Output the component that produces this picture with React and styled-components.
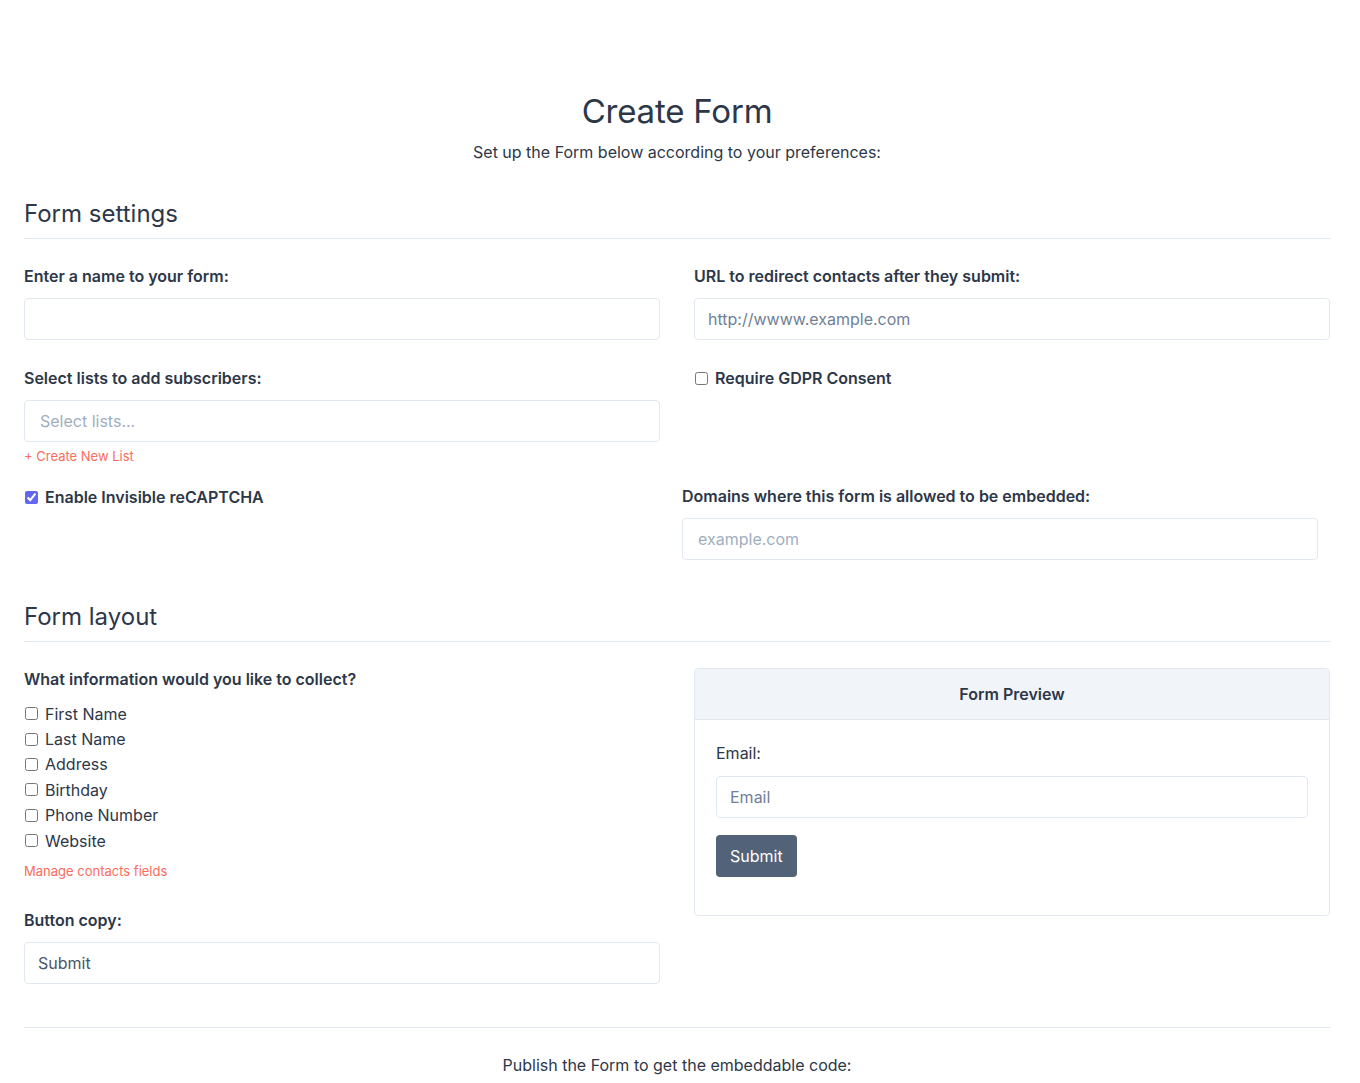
import React from "react";
import styled, { createGlobalStyle } from "styled-components";

const GlobalStyle = createGlobalStyle`
  * { box-sizing: border-box; }
  body {
    margin: 0;
    background: #ffffff;
    font-family: Inter, "Open Sans", "Liberation Sans", sans-serif;
    color: #2d3748;
  }
`;

const Page = styled.div`
  padding: 91px 30px 0 24px;
`;

const Header = styled.header`
  text-align: center;
  margin-bottom: 35px;
`;

const Title = styled.h1`
  margin: 0;
  font-size: 33px;
  line-height: 41px;
  font-weight: 400;
  color: #2d3748;
  letter-spacing: -0.2px;
`;

const Subtitle = styled.p`
  margin: 8px 0 0;
  font-size: 16px;
  line-height: 24px;
  color: #2d3748;
`;

const SectionTitle = styled.h2`
  margin: 0;
  padding-bottom: 10px;
  font-size: 24px;
  line-height: 29px;
  font-weight: 400;
  color: #2d3748;
  border-bottom: 1px solid #e2e8f0;
`;

const Grid = styled.div`
  display: grid;
  grid-template-columns: 1fr 1fr;
  column-gap: 34px;
  row-gap: ${(p) => p.$rowGap || 26}px;
  margin-top: 25px;
  margin-bottom: ${(p) => p.$bottom || 0}px;
  align-items: start;
`;

const Field = styled.div`
  display: flex;
  flex-direction: column;
  margin-left: ${(p) => (p.$shift ? -12 : 0)}px;
  margin-right: ${(p) => (p.$shift ? 12 : 0)}px;
`;

const Label = styled.label`
  display: block;
  font-size: 16px;
  line-height: 24px;
  font-weight: 600;
  color: #2d3748;
  margin-bottom: 10px;
`;

const Input = styled.input`
  width: 100%;
  height: 42px;
  padding: 0 ${(p) => p.$pad || 13}px;
  border: 1px solid #e2e8f0;
  border-radius: 4px;
  font-family: inherit;
  font-size: 16px;
  color: #4a5568;
  background: #fff;
  outline: none;
  &::placeholder {
    color: ${(p) => (p.$light ? "#a0aec0" : "#718096")};
  }
`;

const LinkText = styled.a`
  display: block;
  font-size: 13px;
  line-height: 20px;
  color: #fc6b5c;
  text-decoration: none;
  margin-top: ${(p) => p.$top || 4}px;
`;

const CheckRow = styled.label`
  display: flex;
  align-items: center;
  height: ${(p) => p.$h || 24}px;
  font-size: 16px;
  font-weight: ${(p) => (p.$bold ? 600 : 400)};
  color: #2d3748;
`;

const Check = styled.input.attrs({ type: "checkbox" })`
  width: 13px;
  height: 13px;
  margin: 0 7px 0 1px;
  accent-color: #6366f1;
`;

const Spacer = styled.div`
  height: ${(p) => p.$h}px;
`;

const LayoutWrap = styled.div`
  display: grid;
  grid-template-columns: 1fr 1fr;
  column-gap: 34px;
  margin-top: 25px;
  align-items: start;
`;

const CheckList = styled.div`
  display: flex;
  flex-direction: column;
`;

const Card = styled.div`
  margin-top: 1px;
  border: 1px solid #e2e8f0;
  border-radius: 4px;
  overflow: hidden;
`;

const CardHeader = styled.div`
  height: 51px;
  background: #f1f5f9;
  border-bottom: 1px solid #e2e8f0;
  display: flex;
  align-items: center;
  justify-content: center;
  font-size: 16px;
  font-weight: 600;
  color: #2d3748;
`;

const CardBody = styled.div`
  padding: 21px 21px 38px;
`;

const PlainLabel = styled.label`
  display: block;
  font-size: 16px;
  line-height: 24px;
  color: #2d3748;
  margin-bottom: 11px;
`;

const Button = styled.button`
  margin-top: 17px;
  height: 42px;
  padding: 0 14px;
  background: #526278;
  color: #fff;
  border: none;
  border-radius: 4px;
  font-family: inherit;
  font-size: 16px;
`;

const Divider = styled.hr`
  border: none;
  border-top: 1px solid #e2e8f0;
  margin: 43px 0 0;
`;

const Footer = styled.p`
  margin: 25px 0 0;
  text-align: center;
  font-size: 16px;
  line-height: 24px;
  color: #2d3748;
`;

export default function App() {
  const fields = ["First Name", "Last Name", "Address", "Birthday", "Phone Number", "Website"];
  return (
    <>
      <GlobalStyle />
      <Page>
        <Header>
          <Title>Create Form</Title>
          <Subtitle>Set up the Form below according to your preferences:</Subtitle>
        </Header>

        <SectionTitle>Form settings</SectionTitle>
        <Grid $rowGap={26} $bottom={42}>
          <Field>
            <Label>Enter a name to your form:</Label>
            <Input />
          </Field>
          <Field>
            <Label>URL to redirect contacts after they submit:</Label>
            <Input placeholder="http://wwww.example.com" />
          </Field>
          <Field>
            <Label>Select lists to add subscribers:</Label>
            <Input placeholder="Select lists..." $light $pad={15} />
            <LinkText href="#">+ Create New List</LinkText>
            <Spacer $h={19} />
            <CheckRow $bold>
              <Check defaultChecked />
              Enable Invisible reCAPTCHA
            </CheckRow>
          </Field>
          <Field>
            <CheckRow $bold>
              <Check />
              Require GDPR Consent
            </CheckRow>
            <Spacer $h={94} />
            <Field $shift>
              <Label>Domains where this form is allowed to be embedded:</Label>
              <Input placeholder="example.com" $light $pad={15} />
            </Field>
          </Field>
        </Grid>

        <SectionTitle>Form layout</SectionTitle>
        <LayoutWrap>
          <Field>
            <Label>What information would you like to collect?</Label>
            <CheckList>
              {fields.map((f) => (
                <CheckRow key={f} $h={25.4}>
                  <Check />
                  {f}
                </CheckRow>
              ))}
            </CheckList>
            <LinkText href="#" $top={8}>Manage contacts fields</LinkText>
            <Spacer $h={27} />
            <Label>Button copy:</Label>
            <Input defaultValue="Submit" />
          </Field>
          <Card>
            <CardHeader>Form Preview</CardHeader>
            <CardBody>
              <PlainLabel>Email:</PlainLabel>
              <Input placeholder="Email" />
              <Button>Submit</Button>
            </CardBody>
          </Card>
        </LayoutWrap>

        <Divider />
        <Footer>Publish the Form to get the embeddable code:</Footer>
      </Page>
    </>
  );
}
